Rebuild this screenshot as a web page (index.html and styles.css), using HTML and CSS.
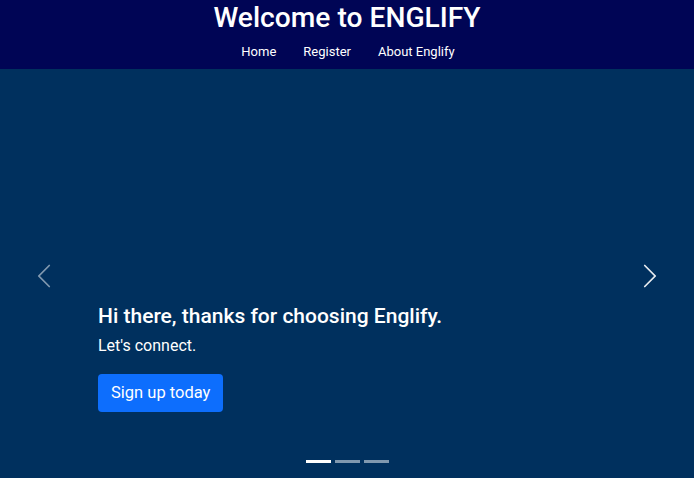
FILE: index.html
```html
<!DOCTYPE html>
<html lang="en">
<head>
<meta charset="utf-8">
<title>Englify</title>
<link rel="stylesheet" href="styles.css">
</head>
<body>
<header class="site-header">
  <h1 class="site-title">Welcome to ENGLIFY</h1>
  <nav class="site-nav">
    <a href="#">Home</a>
    <a href="#">Register</a>
    <a href="#">About Englify</a>
  </nav>
</header>
<section class="carousel">
  <button class="ctrl ctrl-prev" aria-label="Previous">
    <svg viewBox="0 0 16 16" width="28" height="28"><path fill="#fff" d="M11.354 1.646a.5.5 0 0 1 0 .708L5.707 8l5.647 5.646a.5.5 0 0 1-.708.708l-6-6a.5.5 0 0 1 0-.708l6-6a.5.5 0 0 1 .708 0z"/></svg>
  </button>
  <div class="caption">
    <h5 class="caption-title">Hi there, thanks for choosing Englify.</h5>
    <p class="caption-text">Let's connect.</p>
    <a class="btn" href="#">Sign up today</a>
  </div>
  <button class="ctrl ctrl-next" aria-label="Next">
    <svg viewBox="0 0 16 16" width="28" height="28"><path fill="#fff" d="M4.646 1.646a.5.5 0 0 1 .708 0l6 6a.5.5 0 0 1 0 .708l-6 6a.5.5 0 0 1-.708-.708L10.293 8 4.646 2.354a.5.5 0 0 1 0-.708z"/></svg>
  </button>
  <div class="indicators">
    <span class="dot active"></span>
    <span class="dot"></span>
    <span class="dot"></span>
  </div>
</section>
</body>
</html>
```
FILE: styles.css
```css
* { box-sizing: border-box; }
html, body { margin: 0; padding: 0; }
body {
  font-family: Roboto, "Liberation Sans", sans-serif;
  background: #00305e;
  color: #fff;
  height: 478px;
  overflow: hidden;
}
.site-header {
  background: #000555;
  height: 69px;
  display: flex;
  flex-direction: column;
  align-items: center;
  padding-top: 1px;
}
.site-title {
  margin: 0;
  font-size: 28.2px;
  font-weight: 500;
  line-height: 34px;
}
.site-nav {
  display: flex;
  gap: 27px;
  margin-top: 8px;
  padding-left: 2px;
}
.site-nav a {
  color: #fff;
  text-decoration: none;
  font-size: 13px;
  line-height: 18px;
}
.carousel {
  position: relative;
  height: 409px;
  background: #00305e;
  display: flex;
  flex-direction: column;
  justify-content: flex-end;
}
.caption {
  padding: 0 0 66px 98px;
  display: flex;
  flex-direction: column;
  align-items: flex-start;
}
.caption-title {
  margin: 0;
  font-size: 21px;
  font-weight: 500;
  line-height: 24px;
}
.caption-text {
  margin: 6px 0 16px;
  font-size: 16px;
  line-height: 24px;
}
.btn {
  display: inline-block;
  background: #0d6efd;
  color: #fff;
  text-decoration: none;
  font-size: 16.5px;
  line-height: 24px;
  padding: 7px 13px;
  border-radius: 4px;
}
.ctrl {
  position: absolute;
  top: 193px;
  width: 28px;
  height: 28px;
  padding: 0;
  border: 0;
  background: none;
  display: flex;
}
.ctrl-prev { left: 30px; opacity: 0.5; }
.ctrl-next { right: 30px; opacity: 0.9; }
.indicators {
  position: absolute;
  left: 0;
  right: 0;
  bottom: 15px;
  display: flex;
  justify-content: center;
  gap: 4px;
}
.dot {
  width: 25px;
  height: 3px;
  background: #fff;
  opacity: 0.5;
}
.dot.active { opacity: 1; }
```
